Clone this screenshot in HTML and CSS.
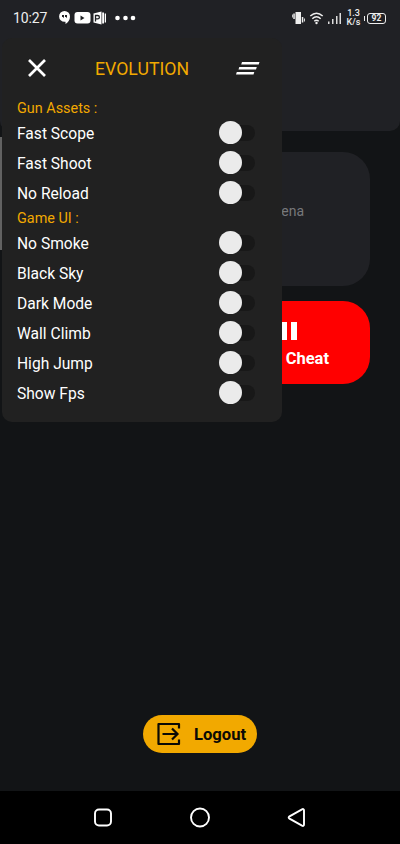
FILE: index.html
```html
<!DOCTYPE html>
<html lang="en">
<head>
<meta charset="utf-8">
<title>Evolution</title>
<link rel="stylesheet" href="styles.css">
</head>
<body>
<div class="screen">
  <header class="hero">
    <div class="status">
      <span class="clock">10:27</span>
      <svg class="apps" width="80" height="16" viewBox="0 0 80 16">
        <path fill="#fff" d="M6.500 1A5.500 5.500 0 0 1 12 6.500c0 3.500-2 6-4.500 7.500v-2.200h-1A5.400 5.400 0 0 1 6.500 1z"/>
        <path fill="#202124" d="M4 5h2v2l-1 1.200V7H4zm3 0h2v2L8 8.200V7H7z"/>
        <rect x="16.500" y="2" width="16" height="11.500" rx="3" fill="#fff"/>
        <path fill="#202124" d="M22.500 5.500v5l4-2.500z"/>
        <path fill="#fff" d="M35.500 3.500l8-2v13l-8-2zM44.200 2.500h1.800v11h-1.800zM46.700 3.500H48v9h-1.300z"/>
        <path fill="none" stroke="#202124" stroke-width="1.300" d="M37.500 11.500v-6h2.200a1.700 1.700 0 0 1 0 3.400h-2.200"/>
        <circle cx="59.500" cy="8" r="2.300" fill="#fff"/><circle cx="67.500" cy="8" r="2.300" fill="#fff"/><circle cx="75" cy="8" r="2.300" fill="#fff"/>
      </svg>
      <svg class="signals" width="52" height="16" viewBox="0 0 52 16">
        <path fill="#eee" d="M3.500 2H9v12H3.500zM1.300 3.500h1.500v5.500H1.300zM0 4.500h.8v3H0zM9.800 7h1.500v5.500H9.800zM12 8.500h.9v3H12z"/>
        <g fill="none" stroke="#eee" stroke-width="1.500"><path d="M18.300 6q6.200-5.500 12.400 0M20.300 8.700q4.200-4 8.400 0M22.300 11.200q2.200-2 4.400 0"/></g>
        <circle cx="24.500" cy="13" r="1.200" fill="#eee"/>
        <path fill="#ddd" d="M36 11.500h1.500V14H36zM40 9h1.500v5H40zM44 6h1.500v8H44zM47.500 3H49v11h-1.500z"/>
      </svg>
      <span class="speed">1.3<br>K/s</span>
      <span class="battery">92</span>
    </div>
  </header>
  <main class="cards">
    <section class="card">Free Fire Arena</section>
    <section class="card stop">
      <svg width="20" height="18" viewBox="0 0 20 18"><path fill="#fff" d="M4 0h6v18H4zM14 0h6v18h-6z"/></svg>
      <span>Stop Cheat</span>
    </section>
  </main>
  <button class="logout">
    <svg width="24" height="24" viewBox="0 0 24 24" fill="none" stroke="#0b0a05" stroke-width="2.200"><path stroke-linejoin="round" d="M22 6.500V2H1.500v20H22v-4.500"/><path d="M5.500 12H21M15 6.500l5.500 5.500-5.500 5.500"/></svg>
    <span>Logout</span>
  </button>
  <nav class="nav">
    <svg width="22" height="22" viewBox="0 0 22 22"><rect x="3" y="2.500" width="16" height="16" rx="4"/></svg>
    <svg width="22" height="22" viewBox="0 0 22 22"><circle cx="11" cy="10.500" r="9"/></svg>
    <svg width="22" height="22" viewBox="0 0 22 22"><path d="M3.500 9.300L16 2.300q2-.8 2 1.200v14q0 2-2 1.200L3.500 11.700q-1.700-1.200 0-2.400z"/></svg>
  </nav>
  <div class="edge"></div>
  <aside class="panel">
    <div class="bar">
      <svg width="20" height="20" viewBox="0 0 20 20"><path d="M2 2l16 16M18 2L2 18" stroke="#fff" stroke-width="2.700"/></svg>
      <h1>EVOLUTION</h1>
      <svg width="24" height="14" viewBox="0 0 24 14"><path fill="#fff" d="M6 1h17.500l-.8 2.500H5.200zM3.300 6h17.500l-.8 2.500H2.500zM.8 11h17.500l-.8 2.500H0z"/></svg>
    </div>
    <h2>Gun Assets :</h2>
    <div class="row">Fast Scope<i class="toggle"></i></div>
    <div class="row">Fast Shoot<i class="toggle"></i></div>
    <div class="row">No Reload<i class="toggle"></i></div>
    <h2>Game UI :</h2>
    <div class="row">No Smoke<i class="toggle"></i></div>
    <div class="row">Black Sky<i class="toggle"></i></div>
    <div class="row">Dark Mode<i class="toggle"></i></div>
    <div class="row">Wall Climb<i class="toggle"></i></div>
    <div class="row">High Jump<i class="toggle"></i></div>
    <div class="row">Show Fps<i class="toggle"></i></div>
  </aside>
</div>
</body>
</html>
```
FILE: styles.css
```css
* { box-sizing: border-box; }
body { margin: 0; background: #121416; font-family: Roboto, sans-serif; }
.screen { position: relative; width: 400px; height: 844px; overflow: hidden; display: flex; flex-direction: column; }
.hero { height: 131px; background: #202125; border-radius: 0 0 10px 10px; }
.status { display: flex; align-items: center; height: 36px; padding: 0 14px 0 13px; color: #eee; }
.clock { font-size: 14px; letter-spacing: -0.1px; width: 45px; white-space: nowrap; }
.apps { margin-right: 154px; flex: none; }
.signals { flex: none; }
.speed { font-size: 9px; line-height: 9px; font-weight: 500; text-align: center; margin-left: 2px; width: 15px; }
.battery { position: relative; margin-left: 6px; width: 19px; height: 11px; border: 1px solid #eee; border-radius: 3px; font-size: 8.500px; line-height: 9.500px; font-weight: 700; text-align: center; flex: none; }
.battery::before { content: ""; position: absolute; left: -4px; top: 2px; width: 1px; height: 5px; background: #eee; }
.cards { padding: 21px 30px 0; display: flex; flex-direction: column; gap: 15px; }
.card { height: 134px; border-radius: 27px; background: #202125; color: #77787b; font-size: 14px; line-height: 118px; padding-right: 66px; text-align: right; }
.stop { height: 82.500px; background: #f00; color: #fff; padding: 21px 41px 0 0; display: flex; flex-direction: column; align-items: flex-end; font-size: 16.500px; font-weight: 700; line-height: 20px; word-spacing: 2px; }
.stop svg { margin-right: 32px; margin-bottom: 9px; flex: none; }
.logout { margin: auto auto 38px 143px; width: 114px; height: 38px; border: 0; border-radius: 19px; background: #f2a900; color: #0b0a05; font: 700 16.600px Roboto, sans-serif; display: flex; align-items: center; gap: 13px; padding: 0 0 0 14px; }
.logout svg { flex: none; }
.nav { height: 53px; background: #000; display: flex; justify-content: space-between; align-items: center; padding: 0 92px; flex: none; }
.nav svg { fill: none; stroke: #fff; stroke-width: 1.900; }
.edge { position: absolute; left: 0; top: 137px; width: 2px; height: 113px; background: #626262; }
.panel { position: absolute; left: 2px; top: 38px; width: 280px; height: 384px; padding: 0 27px 0 15px; background: #212121; border-radius: 10px; color: #fff; }
.bar { height: 60px; padding-left: 10px; display: flex; align-items: center; margin-right: -5px; }
h1 { margin: 0 46px 0 48px; padding-top: 1px; width: 95px; font-size: 17.700px; font-weight: 400; color: #f2a900; }
h2 { margin: 0; height: 20px; font-size: 14.400px; line-height: 22px; font-weight: 400; color: #f2a900; }
.row { height: 30px; line-height: 32px; display: flex; justify-content: space-between; font-size: 15.600px; }
.toggle { position: relative; margin-top: 7px; width: 32px; height: 16px; border-radius: 8px; background: #181818; }
.toggle::before { content: ""; position: absolute; left: -4px; top: -4px; width: 23px; height: 23px; border-radius: 50%; background: #ebebeb; }
```
